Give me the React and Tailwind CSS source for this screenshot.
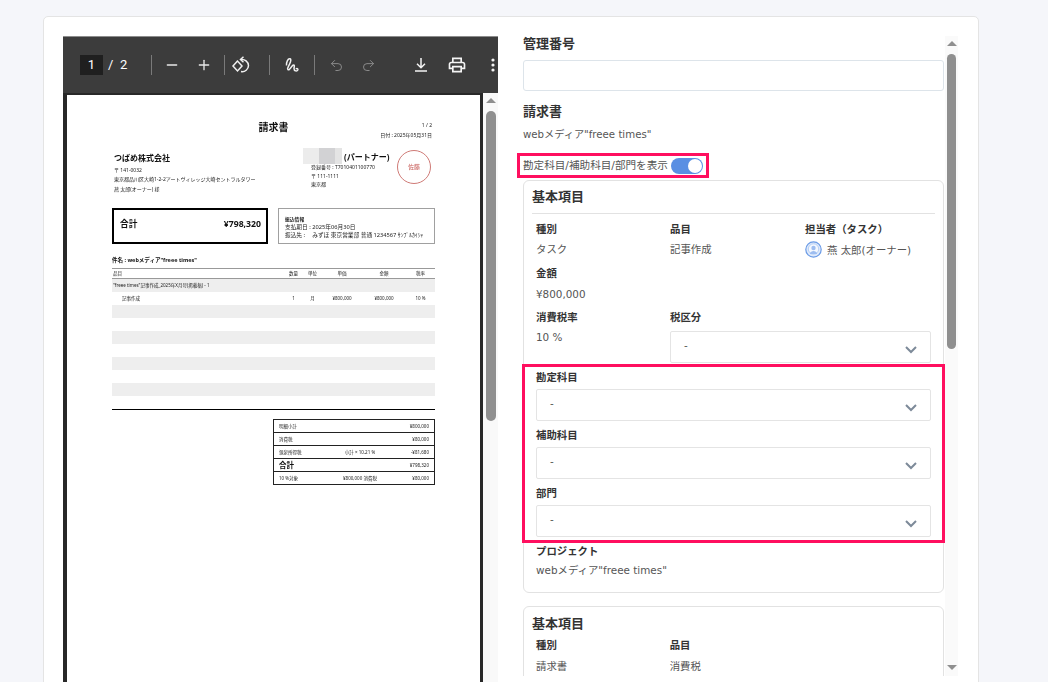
import React from "react";
import { Minus, Plus, Undo2, Redo2 } from "lucide-react";

const Sep = () => <div className="w-px h-5 bg-[#7a7a7a]" />;

function Toolbar() {
  return (
    <div className="h-[57px] shrink-0 bg-[#3c3c3c] border-t border-[#8c8c8c] flex items-center pl-[17px] text-white overflow-hidden font-['Roboto',sans-serif]">
      <div className="w-[23px] h-5 bg-[#1f1f1f] flex items-center justify-center text-[13px]">1</div>
      <span className="ml-[5px] text-[13px] w-[10px]">/</span>
      <span className="ml-[1px] text-[13px] w-[32px] pl-[1px]">2</span>
      <Sep />
      <Minus size={16} strokeWidth={2} className="ml-[12px] text-[#e8e8e8]" />
      <Plus size={16} strokeWidth={2} className="ml-[16px] text-[#e8e8e8]" />
      <div className="w-[12px]" />
      <Sep />
      <svg width="20" height="20" viewBox="0 0 20 20" fill="none" stroke="#f0f0f0" strokeWidth="1.5" className="ml-[6px]">
        <path d="M12.500 1.800 9.500 4.500l3 2.700" />
        <path d="M10 4.500a6.500 6.500 0 0 1 7.500 6 6.200 6.200 0 0 1-7.500 6" />
        <path d="M6.500 6 2 11l4.500 5 4.500-5z" />
      </svg>
      <div className="w-[18px]" />
      <Sep />
      <svg width="20" height="20" viewBox="0 0 20 20" fill="none" stroke="#f0f0f0" strokeWidth="1.5" className="ml-[12px]">
        <path d="M4.500 10.500C4 7.500 6 3.200 8 3.800c2 .6-.2 5-2 8.500-1 2 .2 3 1.500 2C9.500 12.500 10 10 11.500 10c1.500 0 .5 2.200.5 3.500 0 2.700 3 3.200 3.800 1.500.5-1.200-.8-1.800-2-1" />
      </svg>
      <div className="w-[12px]" />
      <Sep />
      <Undo2 size={15} strokeWidth={1.6} className="ml-[14px] text-[#8a8a8a]" />
      <Redo2 size={15} strokeWidth={1.6} className="ml-[17px] text-[#8a8a8a]" />
      <svg width="20" height="20" viewBox="0 0 20 20" fill="none" stroke="#f4f4f4" strokeWidth="1.5" className="ml-[35px]">
        <path d="M10 3v9.500M6 8.800l4 3.900 4-3.900M4 16h12" />
      </svg>
      <svg width="20" height="20" viewBox="0 0 24 24" fill="#f4f4f4" className="ml-[16px]">
        <path d="M19 8h-1V3H6v5H5c-1.660 0-3 1.340-3 3v6h4v4h12v-4h4v-6c0-1.660-1.340-3-3-3zM8 5h8v3H8V5zm8 12v2H8v-4h8v2zm2-2v-2H6v2H4v-4c0-.550.450-1 1-1h14c.550 0 1 .450 1 1v4h-2z" />
      </svg>
      <svg width="4" height="16" viewBox="0 0 4 16" fill="#f4f4f4" className="ml-[24px] shrink-0">
        <circle cx="2" cy="3" r="1.600" /><circle cx="2" cy="8" r="1.600" /><circle cx="2" cy="13" r="1.600" />
      </svg>
    </div>
  );
}

const items = [
  ["明細小計", "", "¥800,000"],
  ["消費税", "", "¥80,000"],
  ["源泉所得税", "小計 × 10.21 %", "-¥81,680"],
  ["合計", "", "¥798,320"],
  ["10 %対象", "¥800,000 消費税", "¥80,000"],
];

function Invoice() {
  return (
    <div className="flex-1 bg-white pl-[45px] pr-[45px] text-[5px] leading-[7px] text-[#222] overflow-hidden blur-[0.25px] font-['Noto_Sans','Noto_Sans_CJK_JP',sans-serif]">
      <div className="relative h-[53px]">
        <div className="absolute top-[25px] left-0 right-0 text-center text-[10px] leading-[14px] font-bold text-[#111]">請求書</div>
        <div className="absolute top-[27px] right-[3px]">1 / 2</div>
        <div className="absolute top-[37px] right-[3px]">日付 : 2025年05月31日</div>
      </div>
      <div className="flex h-[60px]">
        <div className="w-[191px] pl-[2px]">
          <div className="text-[8px] leading-[12px] font-bold text-[#111] mt-[4px]">つばめ株式会社</div>
          <div className="mt-[3px]">〒 141-0032</div>
          <div className="mt-[2px] whitespace-nowrap">東京都品川区大崎1-2-2アートヴィレッジ大崎セントラルタワー</div>
          <div className="mt-[3px]">燕 太郎(オーナー) 様</div>
        </div>
        <div className="w-[93px] relative">
          <div className="flex items-center h-[16px]">
            <div className="w-[16px] h-[16px] bg-[#ececec]" />
            <div className="w-[16px] h-[16px] bg-[#d2d2d4]" />
            <div className="w-[7px] h-[16px] bg-[#e4e4e4]" />
            <span className="ml-[2px] text-[8px] font-bold text-[#111] whitespace-nowrap">(パートナー)</span>
          </div>
          <div className="pl-[8px] mt-[0px] whitespace-nowrap">登録番号 : T7010401100770</div>
          <div className="pl-[8px] mt-[2px]">〒 111-1111</div>
          <div className="pl-[8px] mt-[1px]">東京都</div>
        </div>
        <div className="w-[34px] h-[34px] mt-[2px] ml-[1px] rounded-full border border-[#cf7a76] flex items-center justify-center text-[6px] text-[#c9605c]">佐藤</div>
      </div>
      <div className="flex justify-between h-[36px]">
        <div className="w-[156px] border-2 border-black flex items-center justify-between pl-[6px] pr-[5px] pb-[3px] font-bold text-[8.700px] text-[#111]">
          <span>合計</span><span>¥798,320</span>
        </div>
        <div className="w-[157px] border border-[#a0a0a0] pl-[6px] pt-[7px] whitespace-nowrap text-[5.700px] leading-[7.500px]">
          <div className="font-bold text-[4.800px] leading-[7px]">振込情報</div>
          <div className="mt-[1px]">支払期日 : 2025年06月30日</div>
          <div>振込先 :　 みずほ 東京営業部 普通 1234567 ｻﾝﾌﾟﾙｶｲｼｬ</div>
        </div>
      </div>
      <div className="mt-[12px] font-bold text-[5.500px] leading-[8px] text-[#111]">件名 : webメディア"freee times"</div>
      <div className="mt-[4px] h-[11px] border-y border-[#999] flex items-center text-[4.500px]">
        <span className="w-[172px] pl-[1px]">品目</span>
        <span className="w-[19px] text-center">数量</span>
        <span className="w-[19px] text-center">単位</span>
        <span className="w-[40px] text-center">単価</span>
        <span className="w-[44px] text-center">金額</span>
        <span className="w-[29px] text-center">税率</span>
      </div>
      <div className="h-[13px] bg-[#eeeeee] flex items-center pl-[1px] text-[4.500px] whitespace-nowrap">"freee times"記事作成_2025年X月号(掲載稿) - 1</div>
      <div className="h-[13px] flex items-center text-[4.500px]">
        <span className="w-[172px] pl-[10px]">記事作成</span>
        <span className="w-[19px] text-center">1</span>
        <span className="w-[19px] text-center">月</span>
        <span className="w-[40px] text-center">¥800,000</span>
        <span className="w-[44px] text-center">¥800,000</span>
        <span className="w-[29px] text-center">10 %</span>
      </div>
      <div className="h-[13px] bg-[#eeeeee]" /><div className="h-[13px]" />
      <div className="h-[13px] bg-[#eeeeee]" /><div className="h-[13px]" />
      <div className="h-[13px] bg-[#eeeeee]" /><div className="h-[13px]" />
      <div className="h-[13px] bg-[#eeeeee]" />
      <div className="mt-[13px] h-px bg-black" />
      <div className="mt-[9px] ml-[161px] w-[162px] border border-[#222] border-b-0 text-[4.500px]">
        {items.map(([a, b, c]) => (
          <div key={a} className="h-[13px] border-b border-[#222] flex items-center px-[5px] whitespace-nowrap">
            <span className={a === "合計" ? "w-[46px] text-[7.500px] font-bold text-[#111]" : "w-[46px]"}>{a}</span>
            <span className="flex-1 text-center">{b}</span>
            <span className="w-[34px] text-right">{c}</span>
          </div>
        ))}
      </div>
    </div>
  );
}

function Viewer() {
  return (
    <div className="w-[435px] h-[646px] shrink-0 flex flex-col">
      <Toolbar />
      <div className="flex-1 flex bg-[#282828] min-h-0">
        <div className="flex-1 flex pl-[4px] pr-[3px] pt-[2px] min-h-0"><Invoice /></div>
        <div className="w-[15px] bg-[#f9f9f9] relative flex flex-col items-center shrink-0">
          <div className="mt-[5px] w-0 h-0 border-x-[5px] border-x-transparent border-b-[5px] border-b-[#8f8f8f]" />
          <div className="mt-[8px] w-[10px] h-[310px] rounded-full bg-[#8f8f8f]" />
        </div>
      </div>
    </div>
  );
}

const Label = ({ children, className = "" }) => (
  <div className={"text-[10.400px] leading-[16px] font-bold text-[#333] " + className}>{children}</div>
);
const Val = ({ children, className = "" }) => (
  <div className={"text-[10.400px] leading-[16px] text-[#555] " + className}>{children}</div>
);

function Select({ className = "" }) {
  return (
    <div className={"h-[32px] border border-[#e4e4e4] rounded-[2px] bg-white flex justify-between pl-[13px] pr-[13px] " + className}>
      <span className="text-[10.400px] leading-[26px] text-[#555]">-</span>
      <svg width="12" height="8" viewBox="0 0 12 8" fill="none" stroke="#7d8a99" strokeWidth="2" className="mt-[14px]"><path d="M1 1l5 5 5-5" /></svg>
    </div>
  );
}

function Avatar() {
  return (
    <svg width="17" height="17" viewBox="0 0 17 17" fill="none" className="shrink-0">
      <circle cx="8.500" cy="8.500" r="7.700" fill="#dfeafb" stroke="#6b9be6" strokeWidth="1.200" />
      <circle cx="8.500" cy="8" r="5.200" fill="#f4f8fe" stroke="#a9c6f2" strokeWidth="0.800" />
      <circle cx="8.500" cy="7" r="2.200" fill="#9dbdf0" />
      <path d="M4.800 13c.5-2.300 2-3 3.700-3s3.200.7 3.700 3z" fill="#9dbdf0" />
    </svg>
  );
}

function Details() {
  return (
    <div className="w-[441px] h-[640px] shrink-0 flex overflow-hidden ml-[19px] pl-[6px] font-['DejaVu_Sans','Noto_Sans_CJK_JP',sans-serif]">
      <div className="w-[421px] shrink-0">
        <div className="text-[13px] leading-[16px] font-bold text-[#333]">管理番号</div>
        <div className="mt-[8px] h-[31px] border border-[#dde4ea] rounded-[3px]" />
        <div className="mt-[13px] text-[13px] leading-[16px] font-bold text-[#333]">請求書</div>
        <div className="mt-[7px] text-[10.200px] leading-[16px] text-[#555] whitespace-nowrap">webメディア"freee times"</div>
        <div className="relative mt-[13px] h-[20px] flex items-center">
          <div className="absolute -left-[6px] -top-[3px] w-[192px] h-[25px] border-[3px] border-[#ff0f5f]" />
          <span className="w-[148px] text-[10.600px] text-[#555] whitespace-nowrap">勘定科目/補助科目/部門を表示</span>
          <div className="w-[32px] h-[16px] rounded-full bg-[#5a8fe3] flex items-center justify-end pr-[1px]">
            <div className="w-[14px] h-[14px] rounded-full bg-white" />
          </div>
        </div>
        <div className="mt-[4px] h-[413px] border border-[#e2e2e2] rounded-[6px] px-[8px] pt-[8px]">
          <div className="text-[13px] leading-[16px] font-bold text-[#333]">基本項目</div>
          <div className="mt-[8px] h-px bg-[#e2e2e2]" />
          <div className="mt-[7px] px-[4px]">
            <div className="grid grid-cols-[134px_135px_1fr] w-[395px]">
              <div><Label>種別</Label><Val className="mt-[4px]">タスク</Val></div>
              <div><Label>品目</Label><Val className="mt-[4px]">記事作成</Val></div>
              <div><Label>担当者（タスク）</Label>
                <div className="mt-[4px] flex items-center gap-[5px]"><Avatar /><Val>燕 太郎(オーナー)</Val></div>
              </div>
            </div>
            <Label className="mt-[7px]">金額</Label>
            <Val className="mt-[5px]">¥800,000</Val>
            <div className="grid grid-cols-[134px_1fr] w-[395px] mt-[7px]">
              <div><Label>消費税率</Label><Val className="mt-[4px]">10 %</Val></div>
              <div><Label>税区分</Label><Select className="mt-[6px]" /></div>
            </div>
            <div className="relative mt-[6px]">
              <div className="absolute -left-[14px] -top-[5px] w-[423px] h-[179px] border-[3px] border-[#ff0f5f]" />
              <Label>勘定科目</Label><Select className="mt-[4px] w-[395px]" />
              <Label className="mt-[6px]">補助科目</Label><Select className="mt-[4px] w-[395px]" />
              <Label className="mt-[6px]">部門</Label><Select className="mt-[4px] w-[395px]" />
            </div>
            <Label className="mt-[6px]">プロジェクト</Label>
            <Val className="mt-[3px] whitespace-nowrap">webメディア"freee times"</Val>
          </div>
        </div>
        <div className="mt-[13px] h-[90px] border border-[#e2e2e2] rounded-[6px] px-[8px] pt-[9px]">
          <div className="text-[13px] leading-[16px] font-bold text-[#333]">基本項目</div>
          <div className="mt-[5px] px-[4px] grid grid-cols-3 w-[409px]">
            <div><Label>種別</Label><Val className="mt-[5px]">請求書</Val></div>
            <div><Label>品目</Label><Val className="mt-[5px]">消費税</Val></div>
          </div>
        </div>
      </div>
      <div className="w-[13px] ml-px bg-[#fafafa] flex flex-col items-center relative shrink-0">
        <div className="mt-[5px] w-0 h-0 border-x-[5px] border-x-transparent border-b-[5px] border-b-[#8f8f8f]" />
        <div className="mt-[8px] w-[9px] h-[295px] rounded-full bg-[#8f8f8f]" />
        <div className="mt-auto mb-[6px] w-0 h-0 border-x-[5px] border-x-transparent border-t-[5px] border-t-[#8f8f8f]" />
      </div>
    </div>
  );
}

export default function App() {
  return (
    <div className="h-[682px] w-[1048px] overflow-hidden bg-[#f5f6fa] pt-[16px] pl-[43px]">
      <div className="w-[936px] h-[700px] bg-white border border-[#e4e4e4] rounded-[5px] pt-[19px] pl-[19px] flex items-start">
        <Viewer />
        <Details />
      </div>
    </div>
  );
}
